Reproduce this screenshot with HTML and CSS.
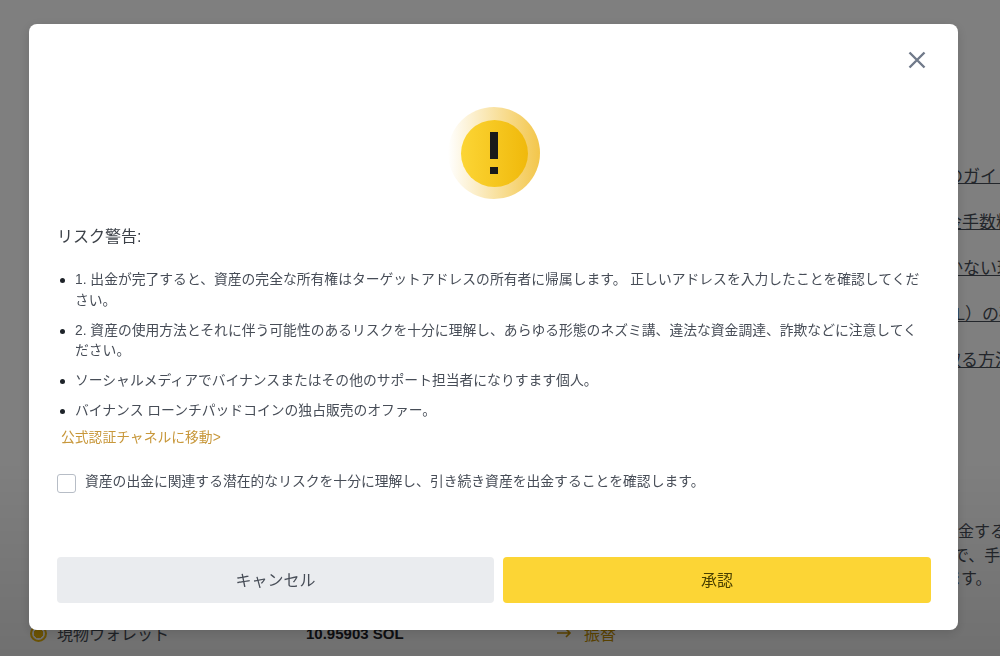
FILE: index.html
```html
<!DOCTYPE html>
<html lang="ja">
<head>
<meta charset="utf-8">
<title>リスク警告</title>
<link rel="stylesheet" href="styles.css">
</head>
<body>
<div class="page">
  <div class="aside">
    <a class="guide g1">出金のガイド</a>
    <a class="guide g2">入金手数料について</a>
    <a class="guide g3">届かない理由について</a>
    <a class="guide g4">（SOL）の確認</a>
    <a class="guide g5">受け取る方法</a>
    <p class="note n1">出金する</p>
    <p class="note n2">ので、手数料</p>
    <p class="note n3">ます。</p>
  </div>
  <div class="wallet">
    <span class="radio"></span>
    <span class="wallet-name">現物ウォレット</span>
    <span class="wallet-amount">10.95903 SOL</span>
    <span class="transfer">
      <svg class="transfer-icon" viewBox="0 0 16 12" width="16" height="12"><path d="M1 6h13M10 2l4 4-4 4" fill="none" stroke="currentColor" stroke-width="1.6"/></svg>
      振替
    </span>
  </div>
</div>
<div class="overlay">
  <div class="modal">
    <div class="modal-head">
      <svg class="close" viewBox="0 0 20 20" width="20" height="20"><path d="M2.5 2.5l15 15M17.5 2.5l-15 15" fill="none" stroke="#707a8a" stroke-width="2.4"/></svg>
    </div>
    <div class="alert">
      <span class="halo"><span class="core">
        <span class="bar"></span><span class="dot"></span>
      </span></span>
    </div>
    <h2 class="title">リスク警告:</h2>
    <ul class="risks">
      <li>1. 出金が完了すると、資産の完全な所有権はターゲットアドレスの所有者に帰属します。 正しいアドレスを入力したことを確認してください。</li>
      <li>2. 資産の使用方法とそれに伴う可能性のあるリスクを十分に理解し、あらゆる形態のネズミ講、違法な資金調達、詐欺などに注意してください。</li>
      <li>ソーシャルメディアでバイナンスまたはその他のサポート担当者になりすます個人。</li>
      <li>バイナンス ローンチパッドコインの独占販売のオファー。</li>
    </ul>
    <a class="official">公式認証チャネルに移動&gt;</a>
    <label class="confirm">
      <span class="box"></span>
      <span>資産の出金に関連する潜在的なリスクを十分に理解し、引き続き資産を出金することを確認します。</span>
    </label>
    <div class="actions">
      <button class="btn cancel">キャンセル</button>
      <button class="btn accept">承認</button>
    </div>
  </div>
</div>
</body>
</html>
```
FILE: styles.css
```css
* { box-sizing: border-box; }
html, body { margin: 0; height: 100%; overflow: hidden; }
body {
  font-family: "Liberation Sans", "Noto Sans CJK JP", sans-serif;
  background: #fff;
  color: #474d57;
}
.page {
  width: 1000px;
  height: 656px;
  overflow: hidden;
  display: flex;
  flex-direction: column;
  justify-content: space-between;
}
.aside {
  display: flex;
  flex-direction: column;
  align-items: flex-start;
  padding: 165px 0 0 918px;
  white-space: nowrap;
  font-size: 16px;
}
.guide {
  display: block;
  height: 46px;
  font-size: 17px;
  line-height: 24px;
  text-decoration: underline;
}
.g1 { margin-left: -6px; }
.g2 { margin-left: 10px; }
.g3 { margin-left: 11px; }
.g4 { margin-left: -4px; }
.g5 { margin-left: -8px; }
.note { margin: 0; line-height: 23.5px; }
.n1 { margin: 125px 0 0 24px; }
.n2 { margin-left: 19px; }
.n3 { margin-left: 27px; }
.wallet {
  display: flex;
  align-items: center;
  height: 20px;
  margin-bottom: 13px;
  padding-left: 30px;
  font-size: 16px;
  white-space: nowrap;
}
.radio {
  width: 17px;
  height: 17px;
  border: 2px solid #f0b90b;
  border-radius: 50%;
  background: radial-gradient(circle, #f0b90b 0 4.5px, transparent 5px);
}
.wallet-name { margin-left: 10px; width: 249px; }
.wallet-amount { width: 250px; font-size: 15px; font-weight: 700; color: #1e2329; }
.transfer { display: flex; align-items: center; gap: 12px; color: #c99400; }
.overlay {
  position: fixed;
  inset: 0;
  background: linear-gradient(180deg, rgba(0, 0, 0, 0.5) 0%, rgba(0, 0, 0, 0.5) 70%, rgba(0, 0, 0, 0.56) 100%);
  padding: 24px 42px 26px 29px;
}
.modal {
  height: 606px;
  display: flex;
  flex-direction: column;
  padding: 26px 27px 27px 28px;
  background: #fff;
  border-radius: 8px;
  box-shadow: 0 3px 12px rgba(0, 0, 0, 0.15);
  color: #474d57;
}
.modal-head { display: flex; justify-content: flex-end; padding-right: 4px; height: 20px; }
.alert { display: flex; justify-content: center; margin-top: 37px; }
.halo {
  width: 92px;
  height: 92px;
  display: flex;
  align-items: center;
  justify-content: center;
  border-radius: 50%;
  background: linear-gradient(90deg, #ffffff 0%, #f3c64a 100%);
}
.core {
  width: 67px;
  height: 67px;
  display: flex;
  flex-direction: column;
  align-items: center;
  border-radius: 50%;
  padding-top: 12px;
  background: linear-gradient(90deg, #fcd535 0%, #f0b90b 100%);
}
.bar { width: 8px; height: 27px; background: #1a1a1a; }
.dot { width: 8px; height: 7px; margin-top: 8px; background: #1a1a1a; }
.title {
  margin: 28px 0 0;
  font-size: 16px;
  line-height: 20px;
  font-weight: 400;
  color: #3c4148;
}
.risks {
  list-style: none;
  margin: 23px 3px 0 0;
  padding: 0 0 0 18px;
  font-size: 13.8px;
  line-height: 20.5px;
}
.risks li { position: relative; margin-bottom: 9.5px; }
.risks li::before {
  content: "";
  position: absolute;
  left: -15.5px;
  top: 8px;
  width: 5px;
  height: 5px;
  border-radius: 50%;
  background: #1e2329;
}
.risks li:last-child { margin-bottom: 0; }
.official {
  display: block;
  margin: 6px 0 0 4px;
  font-size: 13.8px;
  line-height: 20px;
  color: #c8983c;
}
.confirm {
  display: flex;
  align-items: flex-start;
  gap: 9px;
  margin-top: 24px;
  font-size: 13.8px;
  line-height: 20px;
}
.box {
  width: 19px;
  height: 19px;
  flex: none;
  border: 1px solid #b7bdc6;
  border-radius: 3px;
  background: #fff;
  margin-top: 2px;
}
.actions {
  display: flex;
  gap: 9px;
  margin-top: auto;
}
.btn {
  height: 46px;
  padding: 0 0 2px;
  border: 0;
  border-radius: 4px;
  font: inherit;
  font-size: 16px;
  color: #474d57;
}
.cancel { width: 437px; background: #eaecef; }
.accept { flex: 1; background: #fcd535; color: #4a4000; }
```
